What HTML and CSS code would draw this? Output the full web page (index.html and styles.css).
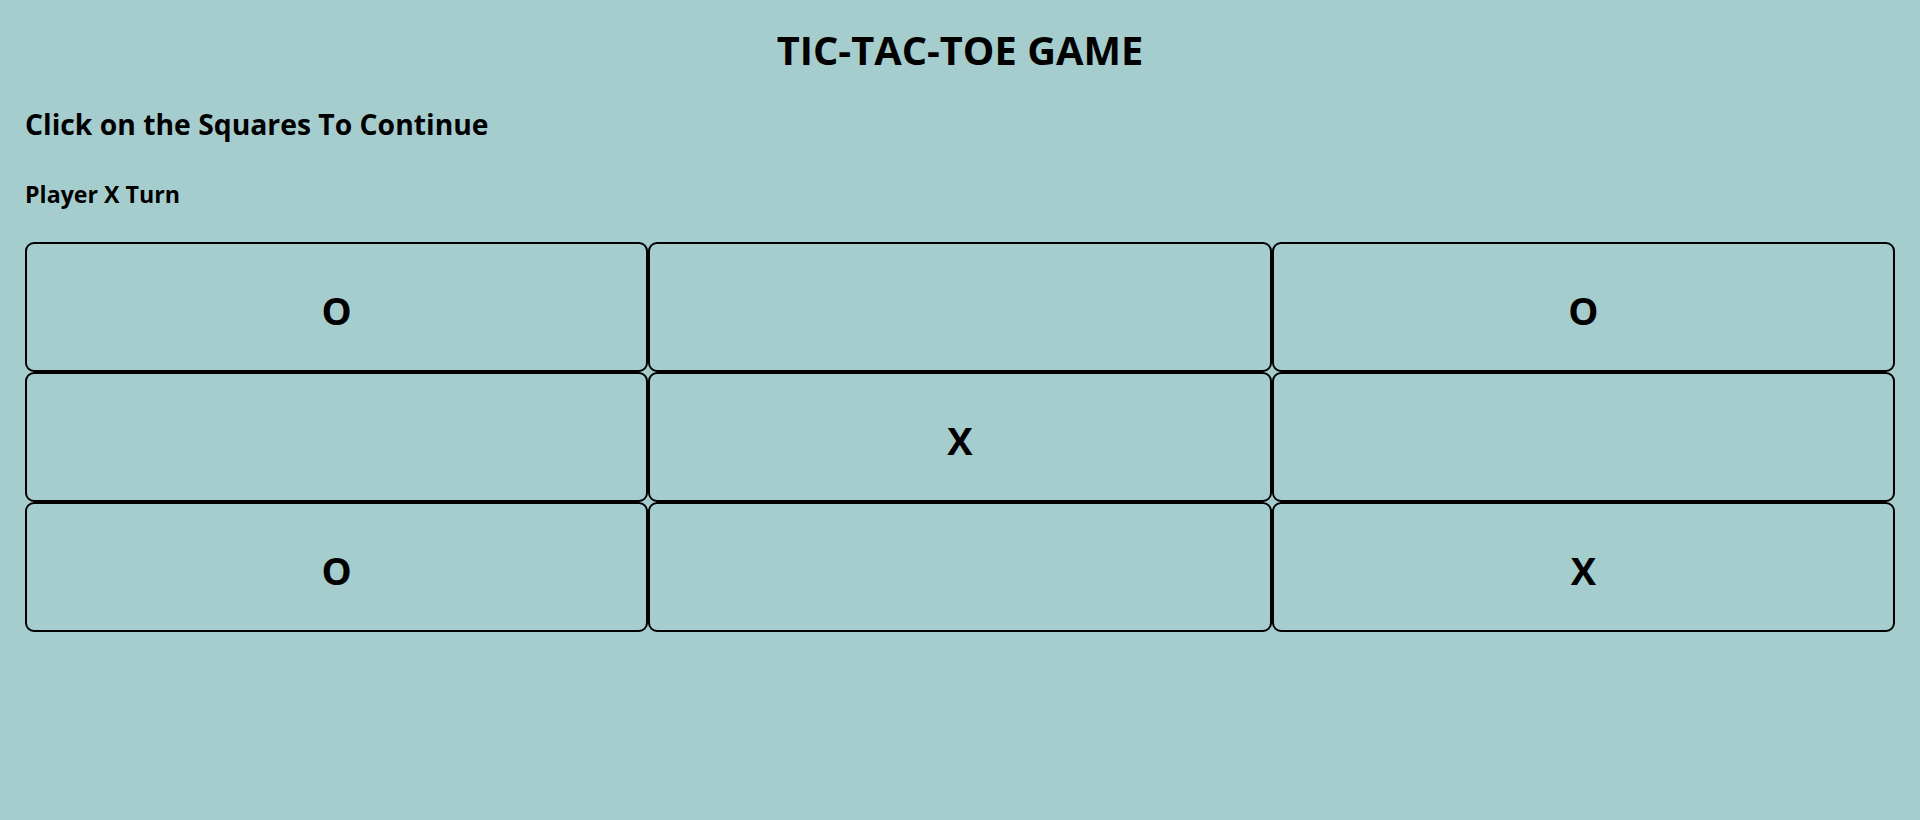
FILE: index.html
```html
<!DOCTYPE html>
<html lang="en">
<head>
<meta charset="utf-8">
<title>Tic-Tac-Toe Game</title>
<link rel="stylesheet" href="styles.css">
</head>
<body>
<main class="page">
  <h1 class="title">TIC-TAC-TOE GAME</h1>
  <h2 class="subtitle">Click on the Squares To Continue</h2>
  <h3 class="status">Player X Turn</h3>
  <div class="board">
    <button class="cell">O</button>
    <button class="cell"></button>
    <button class="cell">O</button>
    <button class="cell"></button>
    <button class="cell">X</button>
    <button class="cell"></button>
    <button class="cell">O</button>
    <button class="cell"></button>
    <button class="cell">X</button>
  </div>
</main>
</body>
</html>
```

FILE: styles.css
```css
html, body {
  margin: 0;
  padding: 0;
  background: #a6cdce;
}

body {
  font-family: "Open Sans", "Noto Sans", sans-serif;
  color: #000;
}

.page {
  padding: 0 25px;
  display: flex;
  flex-direction: column;
}

.title {
  margin: 28px 0 0;
  font-size: 39.8px;
  line-height: 44px;
  font-weight: 700;
  text-align: center;
}

.subtitle {
  margin: 35px 0 0;
  font-size: 28.3px;
  line-height: 34px;
  font-weight: 700;
}

.status {
  margin: 39.5px 0 0;
  font-size: 23.2px;
  line-height: 27px;
  font-weight: 700;
}

.board {
  margin-top: 34.5px;
  display: grid;
  grid-template-columns: repeat(3, 1fr);
  grid-auto-rows: 130px;
}

.cell {
  box-sizing: border-box;
  margin: 0;
  padding: 5px 0 0;
  background: transparent;
  border: 2px solid #000;
  border-radius: 9px;
  font-family: inherit;
  font-size: 38px;
  font-weight: 700;
  color: #000;
  display: flex;
  align-items: center;
  justify-content: center;
}
```
